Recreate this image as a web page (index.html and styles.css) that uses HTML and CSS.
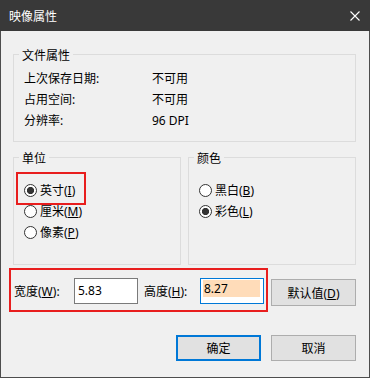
FILE: index.html
```html
<!DOCTYPE html>
<html lang="zh-CN">
<head>
  <meta charset="UTF-8" />
  <meta name="viewport" content="width=device-width, initial-scale=1.0"/>
  <title>映像属性</title>
  <link rel="stylesheet" href="styles.css">
</head>
<body>

    <div class="window">
        <div class="titlebar">
            <span class="title">映像属性</span>
            <svg class="close" width="10" height="10" viewBox="0 0 10 10">
                <path d="M0.5 0.5 L9.5 9.5 M9.5 0.5 L0.5 9.5" stroke="#fff" stroke-width="1.1" fill="none"/>
            </svg>
        </div>

        <div class="content">
            <fieldset class="group">
                <legend>文件属性</legend>
                <div class="info-row"><span class="key">上次保存日期:</span><span>不可用</span></div>
                <div class="info-row"><span class="key">占用空间:</span><span>不可用</span></div>
                <div class="info-row"><span class="key">分辨率:</span><span>96 DPI</span></div>
            </fieldset>

            <div class="group-pair">
                <fieldset class="group">
                    <legend>单位</legend>
                    <div class="radio-row marked"><span class="radio checked"></span><span>英寸(<u>I</u>)</span></div>
                    <div class="radio-row"><span class="radio"></span><span>厘米(<u>M</u>)</span></div>
                    <div class="radio-row"><span class="radio"></span><span>像素(<u>P</u>)</span></div>
                </fieldset>
                <fieldset class="group">
                    <legend>颜色</legend>
                    <div class="radio-row"><span class="radio"></span><span>黑白(<u>B</u>)</span></div>
                    <div class="radio-row"><span class="radio checked"></span><span>彩色(<u>L</u>)</span></div>
                </fieldset>
            </div>

            <div class="size-row">
                <div class="size-box">
                    <span class="size-label">宽度(<u>W</u>):</span>
                    <span class="textbox">5.83</span>
                    <span class="size-label second">高度(<u>H</u>):</span>
                    <span class="textbox focused"><span class="highlight">8.27</span></span>
                </div>
                <button class="btn btn-default">默认值(<u>D</u>)</button>
            </div>

            <div class="actions">
                <button class="btn btn-primary">确定</button>
                <button class="btn">取消</button>
            </div>
        </div>
    </div>

</body>
</html>
```

FILE: styles.css
```css
body
{
    margin: 0;
    padding: 0;
    font-family: "Noto Sans", "Noto Sans CJK SC", sans-serif;
    font-size: 12px;
    color: #000;
    background: #f0f0f0;
}

.window
{
    width: 370px;
    height: 378px;
    box-sizing: border-box;
    background: #f0f0f0;
    border: 1px solid #4d4d4d;
    border-top: none;
}

.titlebar
{
    height: 31px;
    margin: 0 -1px;
    padding: 0 10px 0 9px;
    background: #393939;
    color: #fff;
    display: flex;
    justify-content: space-between;
    align-items: center;
}

.title
{
    line-height: 16px;
    font-family: "Noto Sans CJK SC", sans-serif;
}

.content
{
    padding: 0 13px 0 12px;
}

/* group boxes */
.group
{
    margin: 15px 0 0 0;
    padding: 5px 0 10px 5px;
    border: 1px solid #dcdcdc;
    min-width: 0;
}

.group legend
{
    padding: 0 3px;
    line-height: 17px;
    font-family: "Noto Sans CJK SC", sans-serif;
}

.info-row
{
    display: flex;
    height: 21px;
    line-height: 21px;
    padding-left: 5px;
}

.key
{
    width: 128px;
}

.group-pair
{
    display: grid;
    grid-template-columns: 1fr 1fr;
    gap: 7px;
}

.group-pair .group
{
    margin-top: 7px;
    padding: 14px 0 21px 5px;
}

.radio-row
{
    position: relative;
    display: flex;
    align-items: center;
    gap: 3px;
    height: 21px;
    line-height: 21px;
    padding-left: 5px;
}

.radio
{
    width: 13px;
    height: 13px;
    box-sizing: border-box;
    border: 1px solid #333;
    border-radius: 50%;
    background: #fff;
}

.radio.checked
{
    background: radial-gradient(circle, #333 0, #333 3.3px, #fff 3.9px);
}

.marked::before
{
    content: "";
    position: absolute;
    left: -3px;
    top: -8px;
    width: 70px;
    height: 33px;
    box-sizing: border-box;
    border: 2px solid #e81e1e;
}

/* size fields */
.size-row
{
    display: flex;
    margin: 3px 0 0 -4px;
}

.size-box
{
    display: flex;
    align-items: center;
    padding: 8px 2px 6px 3px;
    border: 2px solid #e81e1e;
}

.size-label
{
    width: 60px;
    line-height: 17px;
}

.size-label.second
{
    width: 56px;
    margin-left: 6px;
}

.textbox
{
    width: 64px;
    height: 26px;
    box-sizing: border-box;
    padding: 0 3px;
    border: 1px solid #7a7a7a;
    background: #fff;
    line-height: 23px;
}

.textbox.focused
{
    padding: 1px 3px 5px 2px;
    border-color: #0078d7;
    line-height: 17px;
}

.highlight
{
    display: block;
    height: 17px;
    padding-left: 1px;
    background: #ffdcb9;
}

.btn
{
    height: 26px;
    width: 85px;
    padding: 0;
    border: 1px solid #adadad;
    background: #e1e1e1;
    font-family: "Noto Sans", "Noto Sans CJK SC", sans-serif;
    font-size: 12px;
    color: #000;
}

.btn-default
{
    margin: 11px 0 0 3px;
    height: 27px;
}

.actions
{
    display: flex;
    justify-content: flex-end;
    gap: 10px;
    margin-top: 23px;
}

.btn-primary
{
    border: 2px solid #0078d7;
}
```
